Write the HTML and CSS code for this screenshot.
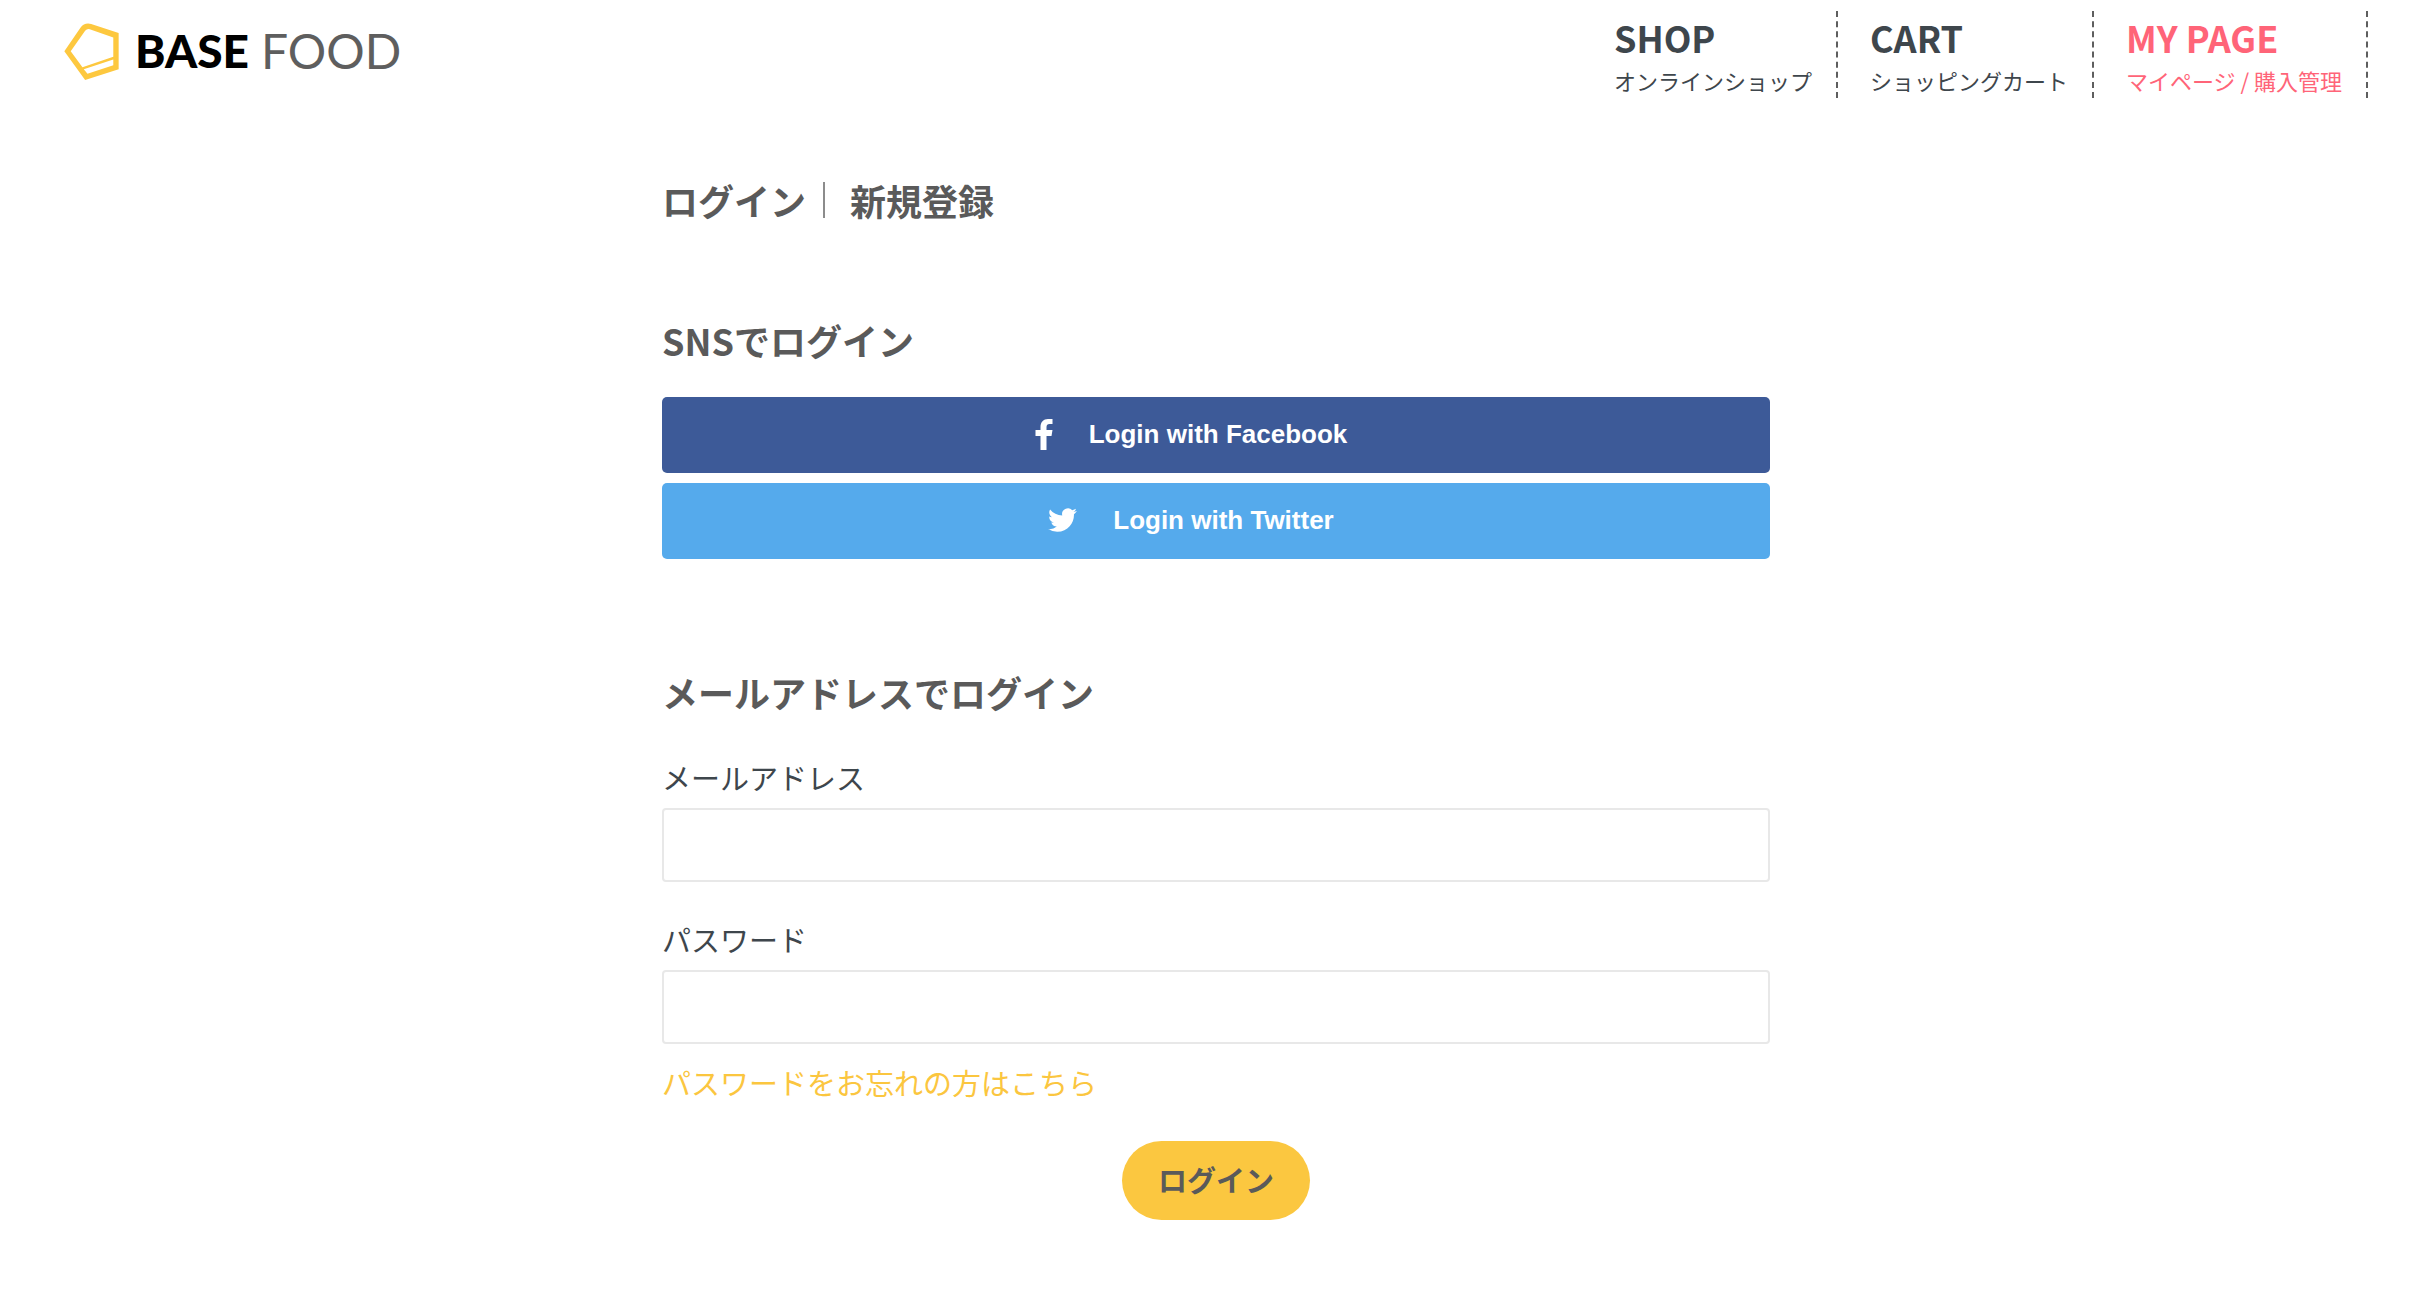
FILE: index.html
```html
<!DOCTYPE html>
<html lang="ja">
<head>
  <meta charset="utf-8">
  <meta name="viewport" content="width=device-width, initial-scale=1">
  <title>ログイン | BASE FOOD</title>
  <link rel="stylesheet" href="styles.css">
</head>

<body>

<header class="header">
  <a class="logo" href="/">
    <svg class="logoMark" viewBox="0 0 162 170" aria-hidden="true">
      <path fill="#fdc83f" fill-rule="evenodd" d="M0 84 L48 14 Q60 -2 80 3 L162 30 V138 L62 170 Z M19 84 L54 132 L146 101 V43 L80 20 Q69 15 62 23 Z M58 138 L146 109 V126 L69 151 Z"/>
    </svg>
    <span class="logoBase">BASE</span>
    <span class="logoFood">FOOD</span>
  </a>
  <nav class="nav">
    <a class="navItem" href="/shop"><span class="navTitle">SHOP</span><span class="navText">オンラインショップ</span></a>
    <a class="navItem" href="/cart"><span class="navTitle">CART</span><span class="navText">ショッピングカート</span></a>
    <a class="navItem current" href="/mypage"><span class="navTitle">MY PAGE</span><span class="navText">マイページ / 購入管理</span></a>
  </nav>
</header>

<main class="main">
  <h1 class="tabs">
    <a href="/login">ログイン</a>
    <a href="/signup">新規登録</a>
  </h1>

  <section class="sns">
    <h2>SNSでログイン</h2>
    <button type="button" class="snsButton facebook">
      <svg width="18" height="31" viewBox="0 0 17 31" aria-hidden="true">
        <path fill="#fff" d="M5 31V17H0V11H5V8C5 3 8 0 12.500 0H17V5H14C12 5 11 6 11 8V11H17L16 17H11V31Z"/>
      </svg>
      Login with Facebook
    </button>
    <button type="button" class="snsButton twitter">
      <svg width="29" height="24" viewBox="0 2 24 20" aria-hidden="true">
        <path fill="#fff" d="M23.950 4.570a10 10 0 0 1-2.820.77 4.960 4.960 0 0 0 2.160-2.720c-.95.55-2 .95-3.130 1.180a4.920 4.920 0 0 0-8.380 4.480C7.690 8.100 4.070 6.130 1.640 3.160a4.820 4.820 0 0 0-.67 2.480c0 1.710.87 3.210 2.190 4.100a4.900 4.900 0 0 1-2.230-.62v.06a4.920 4.920 0 0 0 3.950 4.830 5 5 0 0 1-2.210.08 4.940 4.940 0 0 0 4.600 3.420A9.870 9.870 0 0 1 0 19.540a14 14 0 0 0 7.560 2.210c9.050 0 14-7.500 14-13.980 0-.21 0-.42-.02-.63a9.940 9.940 0 0 0 2.460-2.550z"/>
      </svg>
      Login with Twitter
    </button>
  </section>

  <form class="loginForm" action="/login" method="post">
    <h2>メールアドレスでログイン</h2>
    <div class="field">
      <label for="email">メールアドレス</label>
      <input type="email" id="email" name="email">
    </div>
    <div class="field">
      <label for="password">パスワード</label>
      <input type="password" id="password" name="password">
    </div>
    <a class="forgot" href="/password/reset">パスワードをお忘れの方はこちら</a>
    <button type="submit" class="submit">ログイン</button>
  </form>
</main>

</body>
</html>
```

FILE: styles.css
```css
* {box-sizing:border-box;}
body {margin:0;background:#fff;color:#3e464c;font-family:"Noto Sans CJK JP",sans-serif;font-size:29px;line-height:42px;}
a {color:inherit;text-decoration:none;}

/* header */
.header {display:flex;justify-content:space-between;align-items:flex-start;padding:11px 64px 0;}
.logo {display:flex;align-items:center;height:80px;font-family:Lato,sans-serif;font-size:48px;line-height:60px;}
.logoMark {width:55px;height:57px;}
.logoBase {margin-left:16px;font-weight:900;font-size:46px;color:#000;}
.logoFood {margin-left:12px;font-weight:400;color:#5e5e5e;}
.nav {display:flex;}
.navItem {display:flex;flex-direction:column;padding:0 24px 0 32px;border-right:2px dashed #5e5e5e;}
.navTitle {font-size:36px;font-weight:bold;line-height:52px;}
.navText {font-size:22px;line-height:35px;}
.current {color:#ff6478;}

/* login */
.main {max-width:1108px;margin:0 auto;padding:76px 0 64px;}
.tabs {display:flex;align-items:center;margin:0;font-size:36px;line-height:52px;color:#5a5a5a;}
.tabs a + a {margin-left:17px;padding-left:25px;border-left:2px solid #8c8c8c;line-height:36px;}
h2 {margin:0;font-size:36px;line-height:52px;color:#5a5a5a;}

.sns {display:flex;flex-direction:column;gap:10px;margin-top:88px;}
.sns h2 {margin-bottom:21px;}
.snsButton {display:flex;align-items:center;justify-content:center;gap:36px;height:76px;padding:0 50px 2px 0;border:0;border-radius:5px;color:#fff;font-family:"Liberation Sans",Arial,sans-serif;font-size:26px;font-weight:bold;cursor:pointer;}
.facebook {background:#3d5a98;}
.twitter {background:#55aaec;}

.loginForm {display:flex;flex-direction:column;margin-top:107px;}
.loginForm h2 {margin-bottom:38px;}
.field {display:flex;flex-direction:column;gap:10px;}
.field + .field {margin-top:36px;}
.field input {height:74px;padding:0 16px;border:2px solid #e8e8e8;border-radius:4px;background:#fff;font:inherit;color:inherit;}
.forgot {align-self:flex-start;margin-top:17px;color:#fbc63f;}
.submit {align-self:center;height:79px;margin-top:38px;padding:0 36px 4px;border:0;border-radius:40px;background:#fbc740;color:#5a5a5a;font-family:inherit;font-size:29px;font-weight:bold;cursor:pointer;}
```
